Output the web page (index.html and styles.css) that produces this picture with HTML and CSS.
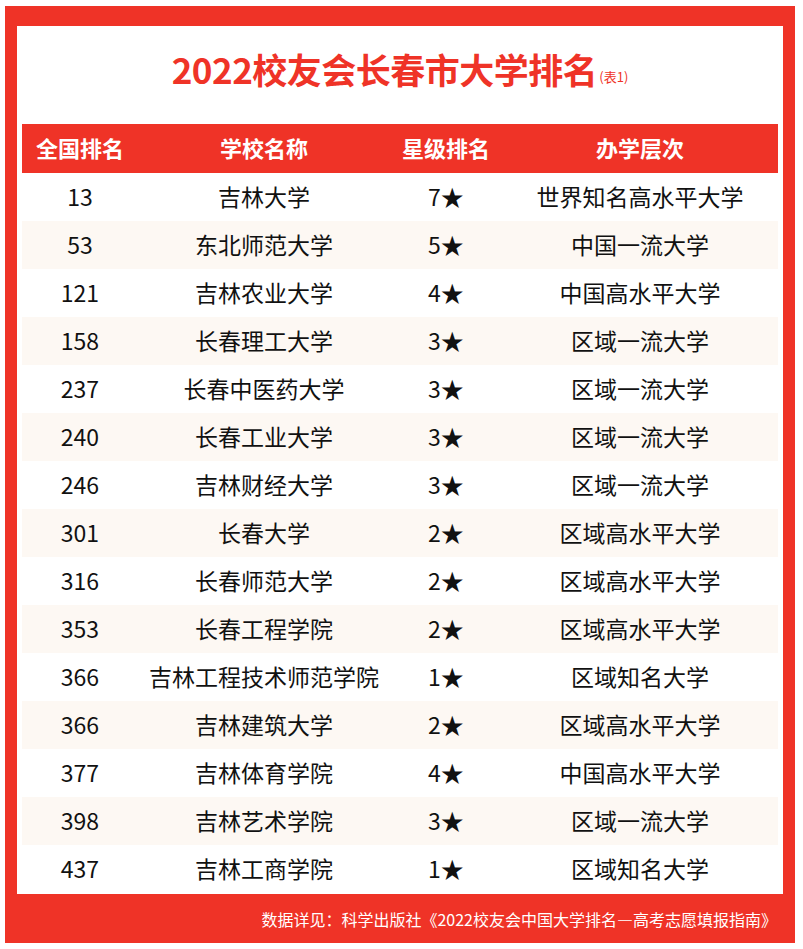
FILE: index.html
```html
<!DOCTYPE html>
<html lang="zh">
<head>
<meta charset="utf-8">
<title>2022校友会长春市大学排名</title>
<link rel="stylesheet" href="styles.css">
</head>
<body>
<div class="frame">
  <div class="sheet">
    <h1 class="title">2022校友会长春市大学排名<span class="sub">(表1)</span></h1>
    <table class="rank">
      <colgroup>
        <col class="c1"><col class="c2"><col class="c3"><col class="c4">
      </colgroup>
      <thead>
        <tr><th>全国排名</th><th>学校名称</th><th>星级排名</th><th>办学层次</th></tr>
      </thead>
      <tbody>
        <tr><td>13</td><td>吉林大学</td><td>7★</td><td>世界知名高水平大学</td></tr>
        <tr><td>53</td><td>东北师范大学</td><td>5★</td><td>中国一流大学</td></tr>
        <tr><td>121</td><td>吉林农业大学</td><td>4★</td><td>中国高水平大学</td></tr>
        <tr><td>158</td><td>长春理工大学</td><td>3★</td><td>区域一流大学</td></tr>
        <tr><td>237</td><td>长春中医药大学</td><td>3★</td><td>区域一流大学</td></tr>
        <tr><td>240</td><td>长春工业大学</td><td>3★</td><td>区域一流大学</td></tr>
        <tr><td>246</td><td>吉林财经大学</td><td>3★</td><td>区域一流大学</td></tr>
        <tr><td>301</td><td>长春大学</td><td>2★</td><td>区域高水平大学</td></tr>
        <tr><td>316</td><td>长春师范大学</td><td>2★</td><td>区域高水平大学</td></tr>
        <tr><td>353</td><td>长春工程学院</td><td>2★</td><td>区域高水平大学</td></tr>
        <tr><td>366</td><td>吉林工程技术师范学院</td><td>1★</td><td>区域知名大学</td></tr>
        <tr><td>366</td><td>吉林建筑大学</td><td>2★</td><td>区域高水平大学</td></tr>
        <tr><td>377</td><td>吉林体育学院</td><td>4★</td><td>中国高水平大学</td></tr>
        <tr><td>398</td><td>吉林艺术学院</td><td>3★</td><td>区域一流大学</td></tr>
        <tr><td>437</td><td>吉林工商学院</td><td>1★</td><td>区域知名大学</td></tr>
      </tbody>
    </table>
  </div>
  <p class="source">数据详见：科学出版社《2022校友会中国大学排名—高考志愿填报指南》</p>
</div>
</body>
</html>
```

FILE: styles.css
```css
html, body {
  margin: 0;
  padding: 0;
  background: #fff;
}
body {
  font-family: "Noto Sans CJK SC", "Noto Sans", sans-serif;
  color: #111;
}
.frame {
  margin: 6px 0 0 5px;
  width: 790px;
  background: #ef3327;
  padding: 20px 12px 0 12px;
  box-sizing: border-box;
}
.sheet {
  background: #fff;
  padding: 0 5px 1px 5px;
}
.title {
  margin: 0;
  height: 98px;
  box-sizing: border-box;
  padding-bottom: 14px;
  display: flex;
  align-items: center;
  justify-content: center;
  color: #ef3327;
  font-size: 35px;
  font-weight: 700;
  letter-spacing: -0.5px;
}
.title .sub {
  font-size: 13px;
  font-weight: 400;
  margin-top: 16px;
  margin-left: 2px;
  letter-spacing: 0;
}
.rank {
  width: 756px;
  border-collapse: collapse;
  table-layout: fixed;
}
.c1 { width: 116px; }
.c2 { width: 252px; }
.c3 { width: 112px; }
.c4 { width: 276px; }
.rank th {
  background: #ef3327;
  color: #fff;
  font-size: 22px;
  font-weight: 700;
  height: 49px;
  box-sizing: border-box;
  padding: 0 0 3px 0;
  text-align: center;
}
.rank td {
  height: 48px;
  box-sizing: border-box;
  padding: 0 0 3px 0;
  text-align: center;
  font-size: 23px;
  color: #111;
}
.rank tbody tr:nth-child(even) td {
  background: #fdf8f3;
}
.source {
  margin: 0;
  height: 49px;
  display: flex;
  align-items: center;
  justify-content: flex-end;
  padding-right: 6px;
  color: #fff;
  font-size: 16px;
}
```
